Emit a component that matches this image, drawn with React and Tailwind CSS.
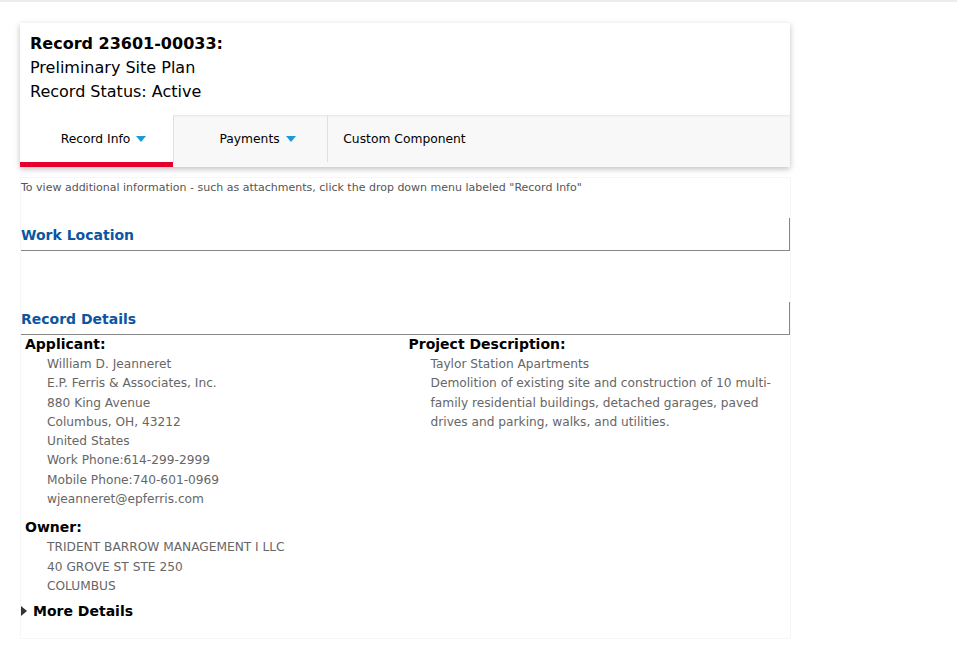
export default function App() {
  const applicant = [
    "William D. Jeanneret",
    "E.P. Ferris & Associates, Inc.",
    "880 King Avenue",
    "Columbus, OH, 43212",
    "United States",
    "Work Phone:614-299-2999",
    "Mobile Phone:740-601-0969",
    "wjeanneret@epferris.com",
  ];
  const owner = ["TRIDENT BARROW MANAGEMENT I LLC", "40 GROVE ST STE 250", "COLUMBUS"];
  const Caret = () => (
    <svg width="10" height="6" viewBox="0 0 10 6" className="ml-[6px] inline-block">
      <path d="M0 0 L10 0 L5 6 Z" fill="#1a9ad9" />
    </svg>
  );
  return (
    <div className="min-h-[658px] w-[957px] bg-white font-['DejaVu_Sans',Verdana,sans-serif] text-black">
      <div className="h-[2px] bg-[#ececec]" />
      <div className="pl-[20px] pt-[21px]">
        <div className="w-[770px] bg-white shadow-[0_2px_6px_rgba(0,0,0,0.25)]">
          <div className="pl-[10px] pt-[9px] pb-[11px] text-[16px] leading-[24px]">
            <div className="font-bold">Record 23601-00033:</div>
            <div>Preliminary Site Plan</div>
            <div>Record Status: Active</div>
          </div>
          <div className="flex h-[52px] bg-[#f8f8f8] shadow-[inset_0_2px_3px_-2px_rgba(0,0,0,0.15)] text-[12.3px]">
            <div className="relative flex h-[52px] w-[153px] items-center justify-center bg-white pb-[4px] pl-[14px]">
              <span>Record Info</span>
              <Caret />
              <div className="absolute bottom-0 left-0 right-0 h-[5px] bg-[#e4002b]" />
            </div>
            <div className="flex h-[47px] w-[154px] items-center justify-center border-l border-[#e0e0e0] pt-[1px] pl-[14px]">
              <span>Payments</span>
              <Caret />
            </div>
            <div className="flex h-[47px] w-[154px] items-center justify-center border-l border-[#e0e0e0] pt-[1px]">
              <span>Custom Component</span>
            </div>
          </div>
        </div>
        <div className="mt-[10px] w-[771px] border border-[#f6f6f6] pt-[2px] pb-[18px]">
          <div className="text-[11px] leading-[16px] text-[#555]">
            To view additional information - such as attachments, click the drop down menu labeled "Record Info"
          </div>
          <div className="mt-[22px] h-[33px] border-r border-b border-[#888] pt-[8px] text-[14px] font-bold leading-[18px] text-[#0b56a0]">
            Work Location
          </div>
          <div className="mt-[51px] h-[33px] border-r border-b border-[#888] pt-[8px] text-[14px] font-bold leading-[18px] text-[#0b56a0]">
            Record Details
          </div>
          <div className="grid grid-cols-2">
            <div className="pl-[4px]">
              <div className="text-[14px] font-bold leading-[18px]">Applicant:</div>
              <div className="mt-[2px] pl-[22px] text-[12.2px] leading-[19.3px] text-[#666]">
                {applicant.map((l) => (
                  <div key={l}>{l}</div>
                ))}
              </div>
              <div className="mt-[9px] text-[14px] font-bold leading-[18px]">Owner:</div>
              <div className="mt-[2px] pl-[22px] text-[12.2px] leading-[19.2px] text-[#666]">
                {owner.map((l) => (
                  <div key={l}>{l}</div>
                ))}
              </div>
            </div>
            <div className="pl-[3px]">
              <div className="text-[14px] font-bold leading-[18px]">Project Description:</div>
              <div className="mt-[2px] pl-[22px] pr-[10px] text-[12.2px] leading-[19.3px] text-[#666]">
                <div>Taylor Station Apartments</div>
                <div>
                  Demolition of existing site and construction of 10 multi-family residential buildings, detached garages, paved drives and parking, walks, and utilities.
                </div>
              </div>
            </div>
          </div>
          <div className="mt-[6px] flex items-center text-[14px] font-bold leading-[18px]">
            <svg width="6" height="10" viewBox="0 0 6 10" className="mr-[6px]">
              <path d="M0 0 L6 5 L0 10 Z" fill="#333" />
            </svg>
            More Details
          </div>
        </div>
      </div>
    </div>
  );
}
